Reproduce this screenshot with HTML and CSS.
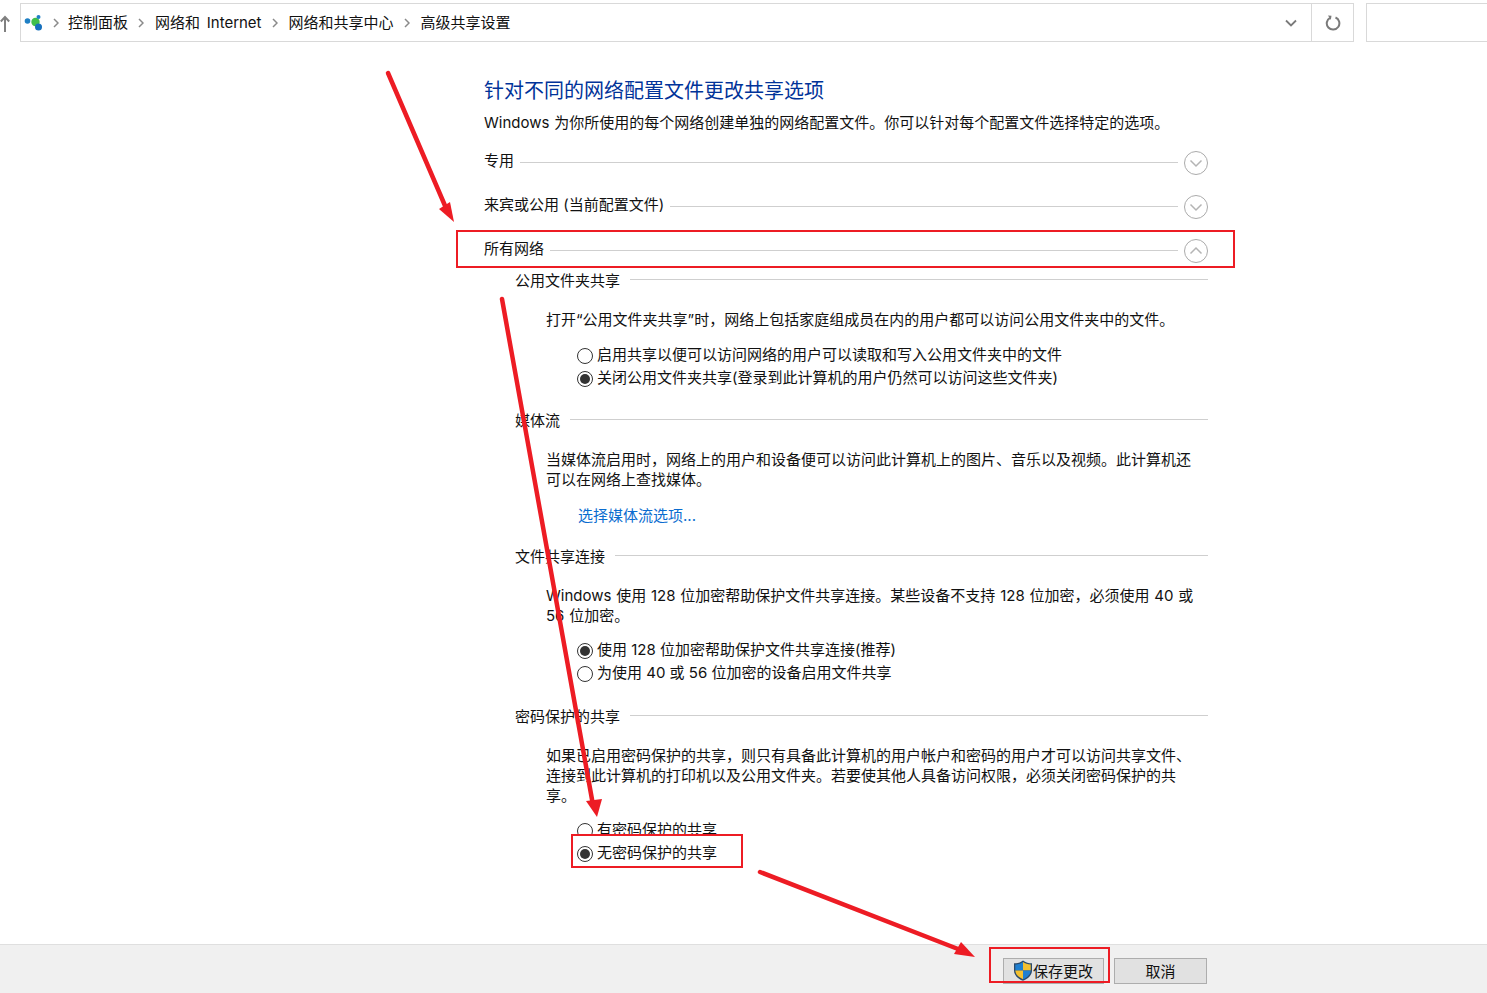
FILE: index.html
```html
<!DOCTYPE html>
<html lang="zh-CN">

<head>
    <meta charset="UTF-8">
    <title>高级共享设置</title>
    <link rel="stylesheet" href="styles.css">
</head>

<body>

    <!-- Address bar -->
    <div class="toolbar">
        <svg class="up-arrow" width="10" height="18" viewBox="0 0 10 18">
            <path d="M5 17V2M.8 6.500 5 2l4.200 4.500" fill="none" stroke="#808080" stroke-width="2"/>
        </svg>
        <div class="address-bar">
            <svg class="net-icon" width="20" height="20" viewBox="0 0 20 20">
                <circle cx="3.500" cy="8" r="2.800" fill="#1f7fc4"/>
                <circle cx="11.500" cy="9" r="4.200" fill="#3fbf4a"/>
                <circle cx="14.500" cy="4" r="2" fill="#1f7fc4"/>
                <circle cx="14.500" cy="14" r="3.500" fill="#1670bd"/>
            </svg>
            <svg class="crumb-sep" width="6" height="10" viewBox="0 0 6 10"><path d="M1 1l4 4-4 4" fill="none" stroke="#8a8a8a" stroke-width="1.500"/></svg>
            <span class="crumb">控制面板</span>
            <svg class="crumb-sep" width="6" height="10" viewBox="0 0 6 10"><path d="M1 1l4 4-4 4" fill="none" stroke="#8a8a8a" stroke-width="1.500"/></svg>
            <span class="crumb">网络和 Internet</span>
            <svg class="crumb-sep" width="6" height="10" viewBox="0 0 6 10"><path d="M1 1l4 4-4 4" fill="none" stroke="#8a8a8a" stroke-width="1.500"/></svg>
            <span class="crumb">网络和共享中心</span>
            <svg class="crumb-sep" width="6" height="10" viewBox="0 0 6 10"><path d="M1 1l4 4-4 4" fill="none" stroke="#8a8a8a" stroke-width="1.500"/></svg>
            <span class="crumb">高级共享设置</span>
            <svg class="dropdown" width="12" height="8" viewBox="0 0 12 8"><path d="M1 1.500l5 5 5-5" fill="none" stroke="#7a7a7a" stroke-width="1.800"/></svg>
            <div class="refresh">
                <svg width="16" height="16" viewBox="0 0 16 16">
                    <path d="M5 2.800A6.300 6.300 0 1 0 10.500 2.500" fill="none" stroke="#7a7a7a" stroke-width="2"/>
                    <path d="M3 .5 6.500 .8 5.800 5z" fill="#7a7a7a"/>
                </svg>
            </div>
        </div>
        <div class="search-box"></div>
    </div>

    <div class="content">
        <h1 class="page-title">针对不同的网络配置文件更改共享选项</h1>
        <p class="page-desc">Windows 为你所使用的每个网络创建单独的网络配置文件。你可以针对每个配置文件选择特定的选项。</p>

        <div class="profile-row">
            <span>专用</span>
            <div class="rule"></div>
            <svg class="toggle" width="26" height="26" viewBox="0 0 26 26">
                <circle cx="13" cy="13" r="11.500" fill="#fff" stroke="#ababab"/>
                <path d="M7.500 10.500 13 16l5.500-5.500" fill="none" stroke="#b4b4b4" stroke-width="1.500"/>
            </svg>
        </div>
        <div class="profile-row">
            <span>来宾或公用 (当前配置文件)</span>
            <div class="rule"></div>
            <svg class="toggle" width="26" height="26" viewBox="0 0 26 26">
                <circle cx="13" cy="13" r="11.500" fill="#fff" stroke="#ababab"/>
                <path d="M7.500 10.500 13 16l5.500-5.500" fill="none" stroke="#b4b4b4" stroke-width="1.500"/>
            </svg>
        </div>
        <div class="profile-row">
            <span>所有网络</span>
            <div class="rule"></div>
            <svg class="toggle" width="26" height="26" viewBox="0 0 26 26">
                <circle cx="13" cy="13" r="11.500" fill="#fff" stroke="#ababab"/>
                <path d="M7.500 15.500 13 10l5.500 5.500" fill="none" stroke="#b4b4b4" stroke-width="1.500"/>
            </svg>
        </div>

        <!-- Public folder sharing -->
        <div class="group first">
            <div class="group-head"><span>公用文件夹共享</span><div class="rule"></div></div>
            <p class="group-desc">打开“公用文件夹共享”时，网络上包括家庭组成员在内的用户都可以访问公用文件夹中的文件。</p>
            <div class="options options-first">
                <div class="option"><span class="radio"></span>启用共享以便可以访问网络的用户可以读取和写入公用文件夹中的文件</div>
                <div class="option"><span class="radio checked"></span>关闭公用文件夹共享(登录到此计算机的用户仍然可以访问这些文件夹)</div>
            </div>
        </div>

        <!-- Media streaming -->
        <div class="group">
            <div class="group-head"><span>媒体流</span><div class="rule"></div></div>
            <p class="group-desc">当媒体流启用时，网络上的用户和设备便可以访问此计算机上的图片、音乐以及视频。此计算机还<br>可以在网络上查找媒体。</p>
            <a class="stream-link" href="#">选择媒体流选项...</a>
        </div>

        <!-- File sharing connections -->
        <div class="group">
            <div class="group-head"><span>文件共享连接</span><div class="rule"></div></div>
            <p class="group-desc">Windows 使用 128 位加密帮助保护文件共享连接。某些设备不支持 128 位加密，必须使用 40 或<br>56 位加密。</p>
            <div class="options">
                <div class="option"><span class="radio checked"></span>使用 128 位加密帮助保护文件共享连接(推荐)</div>
                <div class="option"><span class="radio"></span>为使用 40 或 56 位加密的设备启用文件共享</div>
            </div>
        </div>

        <!-- Password protected sharing -->
        <div class="group group-last">
            <div class="group-head"><span>密码保护的共享</span><div class="rule"></div></div>
            <p class="group-desc">如果已启用密码保护的共享，则只有具备此计算机的用户帐户和密码的用户才可以访问共享文件、<br>连接到此计算机的打印机以及公用文件夹。若要使其他人具备访问权限，必须关闭密码保护的共<br>享。</p>
            <div class="options">
                <div class="option"><span class="radio"></span>有密码保护的共享</div>
                <div class="marked-option">
                    <div class="option"><span class="radio checked"></span>无密码保护的共享</div>
                </div>
            </div>
        </div>
    </div>

    <div class="footer">
        <button class="btn btn-save">
            <svg width="20" height="21" viewBox="0 0 20 20" preserveAspectRatio="none">
                <path d="M10 .5C7.500 2.500 4 3.200 1 3.200V10c0 4.500 4 8 9 9.800 5-1.800 9-5.300 9-9.800V3.200C16 3.200 12.500 2.500 10 .5z" fill="#2b4a6b"/>
                <path d="M10 2V10H2.300V4.300C5.300 4.200 8 3.500 10 2z" fill="#1f7fd0"/>
                <path d="M10 2V10h7.700V4.300C14.700 4.200 12 3.500 10 2z" fill="#f4c02f"/>
                <path d="M2.300 10H10v8.400C6 16.800 2.500 14 2.300 10z" fill="#f4c02f"/>
                <path d="M17.700 10H10v8.400c4-1.600 7.500-4.400 7.700-8.400z" fill="#1f7fd0"/>
            </svg>
            保存更改
        </button>
        <button class="btn btn-cancel">取消</button>
    </div>

    <!-- Red annotations drawn over the screenshot -->
    <svg class="annotations" width="1487" height="993" viewBox="0 0 1487 993">
        <g fill="none" stroke="#ed1c24" stroke-width="2">
            <rect x="457" y="231" width="777" height="36"/>
            <rect x="990" y="948" width="119" height="34"/>
        </g>
        <g stroke="#ed1c24" stroke-width="4.500" stroke-linecap="round">
            <path d="M388 73 446 208"/>
            <path d="M502 299 593 805"/>
            <path d="M760 872 958 949"/>
        </g>
        <g fill="#ed1c24">
            <path d="M454 222 439 209 450 202z"/>
            <path d="M597 817 586 801 602 799z"/>
            <path d="M975 957 961 942 954 954z"/>
        </g>
    </svg>

</body>

</html>
```

FILE: styles.css
```css
* {
    box-sizing: border-box;
}

body {
    font-family: Inter, "Noto Sans CJK SC", sans-serif;
    font-size: 15px;
    line-height: 20px;
    color: #111;
    background-color: #fff;
    margin: 0;
    height: 100vh;
    overflow: hidden;
    display: flex;
    flex-direction: column;
    position: relative;
}

/* toolbar */
.toolbar {
    display: flex;
    align-items: center;
    height: 39px;
    margin-top: 3px;
    flex-shrink: 0;
}

.up-arrow {
    flex-shrink: 0;
    margin-right: 10px;
    margin-top: 3px;
}

.address-bar {
    flex: 1;
    height: 100%;
    display: flex;
    align-items: center;
    border: 1px solid #d9d9d9;
    padding-left: 3px;
}

.net-icon {
    flex-shrink: 0;
}

.crumb-sep {
    margin: 0 11px 0 10px;
    flex-shrink: 0;
}

.crumb-sep:nth-of-type(2) {
    margin: 0 9px 0 9px;
}

.crumb {
    white-space: nowrap;
    word-spacing: 2.500px;
}

.dropdown {
    margin-left: auto;
    margin-right: 14px;
}

.refresh {
    width: 42px;
    height: 100%;
    display: flex;
    align-items: center;
    justify-content: center;
    border-left: 1px solid #d9d9d9;
}

.search-box {
    width: 131px;
    height: 100%;
    margin-left: 12px;
    margin-right: -10px;
    border: 1px solid #d9d9d9;
}

/* main column */
.content {
    width: 724px;
    margin-left: 484px;
    padding-top: 35px;
}

.page-title {
    font-size: 20px;
    line-height: 28px;
    font-weight: 400;
    color: #003399;
    margin: 0 0 8px;
}

.page-desc {
    margin: 0 0 17px;
    white-space: nowrap;
    word-spacing: .6px;
}

.profile-row {
    display: flex;
    align-items: center;
    height: 24px;
    margin-bottom: 20px;
    white-space: nowrap;
}

.profile-row span {
    margin-bottom: 2px;
}

.rule {
    flex: 1;
    height: 1px;
    background-color: #cfcfcf;
    margin-left: 6px;
}

.toggle {
    margin: 2px -1px 0 5px;
    flex-shrink: 0;
}

/* sub sections */
.group {
    padding-left: 31px;
    margin-top: 21px;
}

.group.first {
    margin-top: -11px;
}

.group-last {
    margin-top: 22px;
}

.group-head {
    display: flex;
    align-items: center;
    height: 20px;
    white-space: nowrap;
}

.group-head .rule {
    margin-left: 10px;
    margin-top: -4px;
}

.group-desc {
    margin: 19px 0 0 31px;
    white-space: nowrap;
    word-spacing: .6px;
}

.options {
    margin: 13px 0 0 62px;
}

.options-first {
    margin-top: 14px;
}

.option {
    display: flex;
    align-items: center;
    height: 23px;
    padding-bottom: 2px;
    white-space: nowrap;
}

.radio {
    width: 16px;
    height: 16px;
    margin: 2px 4px 0 0;
    flex-shrink: 0;
    border: 1px solid #333;
    border-radius: 50%;
    background-color: #fff;
    display: flex;
    align-items: center;
    justify-content: center;
}

.radio.checked::after {
    content: "";
    width: 10px;
    height: 10px;
    border-radius: 50%;
    background-color: #333;
}

.marked-option {
    position: relative;
    width: 172px;
    height: 34px;
    margin: -8px 0 0 -6px;
    padding: 6px 0 0 4px;
    background-color: #fff;
    border: 2px solid #ed1c24;
}

.stream-link {
    display: block;
    margin: 16px 0 0 63px;
    color: #0a6ccf;
    text-decoration: none;
}

/* footer */
.footer {
    margin-top: auto;
    height: 49px;
    flex-shrink: 0;
    display: flex;
    justify-content: flex-end;
    gap: 10px;
    padding: 13px 280px 0 0;
    background-color: #f0f0f0;
    border-top: 1px solid #dfdfdf;
}

.btn {
    height: 26px;
    font-family: inherit;
    font-size: 15px;
    color: #111;
    background-color: #e1e1e1;
    border: 1px solid #adadad;
    padding: 0 0 2px;
    display: flex;
    align-items: center;
    justify-content: center;
}

.btn-save {
    width: 101px;
    padding-right: 1px;
}

.btn-save svg {
    margin-top: 1px;
}

.btn-cancel {
    width: 93px;
}

/* annotations */
.annotations {
    position: absolute;
    top: 0;
    left: 0;
    pointer-events: none;
}
```
